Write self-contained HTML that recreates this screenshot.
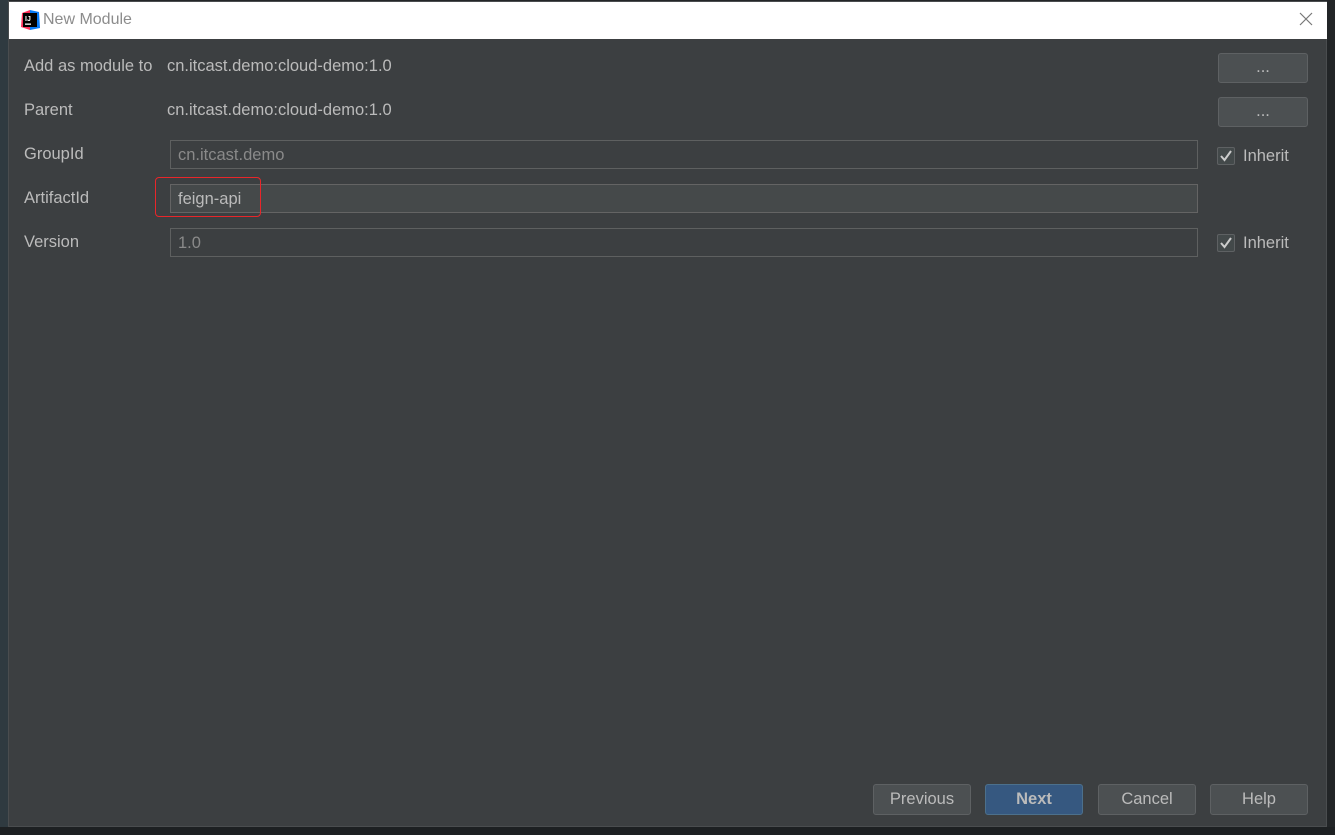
<!DOCTYPE html>
<html><head><meta charset="utf-8"><style>
*{margin:0;padding:0;box-sizing:border-box}
body{width:1335px;height:835px;background:#222527;position:relative;overflow:hidden;font-family:"Liberation Sans","Noto Sans CJK SC",sans-serif;font-size:16.5px;color:#bbbbbb}
.lstrip{position:absolute;left:0;top:0;width:9px;height:835px;background:#2f3a40}
.bot{position:absolute;left:0;top:827px;width:1335px;height:8px;background:#1d2022}
.dlg{position:absolute;left:8px;top:1px;width:1319px;height:826px;background:#3c3f41;border:1px solid #4a4d4f}
.title{position:absolute;left:0;top:0;width:1318px;height:37px;background:#fff;color:#8c8c8c;font-size:16px}
.title span{position:absolute;left:34px;top:9px}
.x{position:absolute;right:14px;top:10px}
.abs{position:absolute}
.lbl{position:absolute;left:15px}
.btn{position:absolute;background:#4c5052;border:1px solid #5e6163;border-radius:3px;color:#bbbbbb;text-align:center}
.inp{position:absolute;left:161px;width:1028px;height:29px;border:1px solid #5e6060;color:#8a8a8a;padding:5px 0 0 7px}
.cb{position:absolute;width:18px;height:18px;border:1px solid #5e6163;border-radius:2px;background:#43494a}
</style></head><body>
<div class="lstrip"></div><div class="bot"></div>
<div class="dlg">
<div class="title">
<svg class="abs" style="left:11px;top:8px" width="20" height="20" viewBox="0 0 20 20"><path d="M2 3 L10 0 L10 20 L1 17Z" fill="#fe3159"/><path d="M10 0 L19 2 L20 18 L10 20Z" fill="#087cfa"/><rect x="3" y="3" width="14" height="14" fill="#000"/><text x="5" y="11" font-size="7" font-weight="bold" fill="#fff" font-family="Liberation Sans">IJ</text><rect x="5" y="13.5" width="6" height="1.3" fill="#fff"/></svg>
<span>New Module</span>
<svg class="x" width="14" height="14" viewBox="0 0 14 14"><path d="M1 1L13 13M13 1L1 13" stroke="#777" stroke-width="1.2"/></svg>
</div>
<div class="lbl" style="top:55px">Add as module to</div>
<div class="abs" style="left:158px;top:55px">cn.itcast.demo:cloud-demo:1.0</div>
<div class="btn" style="left:1209px;top:51px;width:90px;height:30px;line-height:26px">...</div>
<div class="lbl" style="top:99px">Parent</div>
<div class="abs" style="left:158px;top:99px">cn.itcast.demo:cloud-demo:1.0</div>
<div class="btn" style="left:1209px;top:95px;width:90px;height:30px;line-height:26px">...</div>
<div class="lbl" style="top:143px">GroupId</div>
<div class="inp" style="top:138px">cn.itcast.demo</div>
<div class="cb" style="left:1208px;top:145px"><svg width="16" height="16"><path d="M3 8L6.5 12L13 3" stroke="#ccc" stroke-width="2" fill="none"/></svg></div>
<div class="abs" style="left:1234px;top:145px">Inherit</div>
<div class="lbl" style="top:187px">ArtifactId</div>
<div class="inp" style="top:182px;background:#45494a;border-color:#646464;color:#bbbbbb">feign-api</div>
<div class="abs" style="left:146px;top:175px;width:106px;height:40px;border:1.5px solid #e8262a;border-radius:4px"></div>
<div class="lbl" style="top:231px">Version</div>
<div class="inp" style="top:226px">1.0</div>
<div class="cb" style="left:1208px;top:232px"><svg width="16" height="16"><path d="M3 8L6.5 12L13 3" stroke="#ccc" stroke-width="2" fill="none"/></svg></div>
<div class="abs" style="left:1234px;top:232px">Inherit</div>
<div class="btn" style="left:864px;top:782px;width:98px;height:31px;line-height:29px">Previous</div>
<div class="btn" style="left:976px;top:782px;width:98px;height:31px;line-height:29px;background:#365880;border-color:#4c708c;font-weight:bold">Next</div>
<div class="btn" style="left:1089px;top:782px;width:98px;height:31px;line-height:29px">Cancel</div>
<div class="btn" style="left:1201px;top:782px;width:98px;height:31px;line-height:29px">Help</div>
</div>
</body></html>
